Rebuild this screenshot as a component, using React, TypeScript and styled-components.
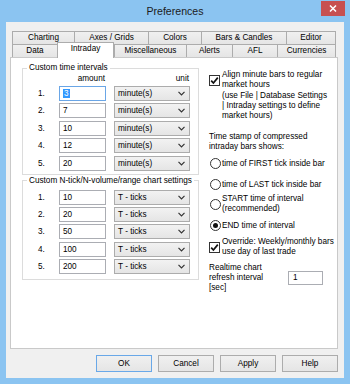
import React from 'react';
import styled, { createGlobalStyle } from 'styled-components';

const GlobalStyle = createGlobalStyle`
  html, body {
    margin: 0;
    padding: 0;
    background: #8bc4f1;
  }
  body {
    font-family: "Liberation Sans", Arial, sans-serif;
    font-size: 8.2px;
    color: #000;
  }
`;

const Window = styled.div`
  width: 350px;
  height: 384px;
  display: flex;
  flex-direction: column;
  background: #8bc4f1;
`;

const TitleBar = styled.div`
  height: 22px;
  display: grid;
  grid-template-columns: 1fr auto 1fr;
  align-items: start;
`;

const Title = styled.div`
  grid-column: 2;
  font-size: 10.6px;
  line-height: 23px;
  color: #1b1b1b;
`;

const CloseButton = styled.div`
  grid-column: 3;
  justify-self: end;
  width: 24px;
  height: 15px;
  margin: 1px 5px 0 0;
  background: #c75050;
  display: flex;
  align-items: center;
  justify-content: center;
`;

const Client = styled.div`
  flex: 1;
  margin: 0 6px 6px;
  padding: 9px 6px 6px 4px;
  background: #f0f0f0;
  display: flex;
  flex-direction: column;
`;

const TabStrip = styled.div`
  margin-left: 2px;
  width: 324px;
  display: flex;
  flex-direction: column;
`;

const TabRow = styled.div`
  height: 13px;
  display: flex;
`;

const Tab = styled.div<{ $w: number; $active?: boolean }>`
  box-sizing: border-box;
  width: ${(p) => p.$w}px;
  height: ${(p) => (p.$active ? 16 : 13)}px;
  margin-top: ${(p) => (p.$active ? -2 : 0)}px;
  border-top: 1px solid #acacac;
  border-left: 1px solid #acacac;
  border-right: ${(p) => (p.$active ? '1px solid #acacac' : 'none')};
  background: ${(p) => (p.$active ? '#fff' : 'linear-gradient(#f0f0f0, #e5e5e5)')};
  position: ${(p) => (p.$active ? 'relative' : 'static')};
  z-index: ${(p) => (p.$active ? 1 : 0)};
  text-align: center;
  line-height: 12px;
  white-space: nowrap;

  &:last-child {
    border-right: 1px solid #acacac;
  }
`;

const Panel = styled.div`
  flex: 1;
  border: 1px solid #c9c9c9;
  background: #fff;
  padding: 5px 0 0 11px;
  display: grid;
  grid-template-columns: 177px 1fr;
  column-gap: 10px;
  align-items: start;
`;

const LeftColumn = styled.div`
  display: flex;
  flex-direction: column;
  gap: 1px;
`;

const Group = styled.fieldset`
  margin: 0;
  padding: 0;
  min-width: 0;
  border: 1px solid #dcdcdc;
`;

const Legend = styled.legend`
  margin-left: 4px;
  padding: 0 2px;
  line-height: 10px;
  white-space: nowrap;
`;

const GroupBody = styled.div<{ $top: number; $bottom: number }>`
  padding: ${(p) => p.$top}px 0 ${(p) => p.$bottom}px 15px;
`;

const FieldGrid = styled.div`
  display: grid;
  grid-template-columns: 13px 47px 76px;
  column-gap: 8px;
  row-gap: 2.4px;
  grid-auto-rows: 15px;
  align-items: center;
`;

const HeaderRow = styled.div`
  display: grid;
  grid-template-columns: 13px 47px 76px;
  column-gap: 8px;
  line-height: 10px;
  margin: 1px 0 2px;
`;

const HeaderCell = styled.div`
  text-align: right;
  padding-right: 1px;
`;

const RowNum = styled.div`
  line-height: 15px;
`;

const TextBox = styled.div<{ $focused?: boolean }>`
  box-sizing: border-box;
  height: 15px;
  border: 1px solid ${(p) => (p.$focused ? '#6aa6e6' : '#abadb3')};
  background: #fff;
  padding-left: 3px;
  line-height: 13px;
  white-space: nowrap;
`;

const Selected = styled.span`
  background: #3399ff;
  color: #fff;
  padding: 0 1px;
`;

const Combo = styled.div`
  box-sizing: border-box;
  height: 15px;
  border: 1px solid #acacac;
  background: linear-gradient(#f2f2f2, #e5e5e5);
  padding: 0 4px 0 3px;
  display: flex;
  align-items: center;
  justify-content: space-between;
  white-space: nowrap;
`;

const RightColumn = styled.div`
  display: flex;
  flex-direction: column;
  line-height: 10px;
`;

const Block = styled.div<{ $top: number; $indent?: number }>`
  margin-top: ${(p) => p.$top}px;
  margin-left: ${(p) => p.$indent ?? 0}px;
  white-space: nowrap;
`;

const OptionRow = styled.div<{ $top: number }>`
  margin-top: ${(p) => p.$top}px;
  display: flex;
  align-items: center;
  gap: 2px;
  white-space: nowrap;
`;

const CheckBox = styled.div`
  box-sizing: border-box;
  width: 11px;
  height: 11px;
  border: 1px solid #333;
  background: #fff;
  display: flex;
  align-items: center;
  justify-content: center;
  flex-shrink: 0;
`;

const Radio = styled.div<{ $on?: boolean }>`
  box-sizing: border-box;
  width: 11px;
  height: 11px;
  margin-left: 1px;
  margin-right: -1px;
  border: 1px solid #333;
  border-radius: 50%;
  background: #fff;
  display: flex;
  align-items: center;
  justify-content: center;
  flex-shrink: 0;

  &::after {
    content: '';
    display: ${(p) => (p.$on ? 'block' : 'none')};
    width: 5px;
    height: 5px;
    border-radius: 50%;
    background: #111;
  }
`;

const RefreshRow = styled.div`
  margin-top: 6px;
  display: flex;
  align-items: center;
`;

const RefreshLabel = styled.div`
  width: 79px;
  white-space: nowrap;
`;

const SmallBox = styled(TextBox)`
  width: 35px;
  height: 14px;
  padding-left: 4px;
  line-height: 12px;
`;

const ButtonBar = styled.div`
  margin-top: 6px;
  display: flex;
  justify-content: flex-end;
  gap: 6px;
`;

const Button = styled.div<{ $default?: boolean }>`
  box-sizing: border-box;
  width: 56px;
  height: 17px;
  border: 1px solid ${(p) => (p.$default ? '#69a8e8' : '#acacac')};
  background: linear-gradient(#f0f0f0, #e5e5e5);
  text-align: center;
  line-height: 15px;
`;

const Chevron = () => (
  <svg width="7" height="5" viewBox="0 0 7 5">
    <polyline points="0.5,0.8 3.5,3.8 6.5,0.8" fill="none" stroke="#333" strokeWidth="1.2" />
  </svg>
);

const Check = () => (
  <svg width="9" height="9" viewBox="0 0 9 9">
    <polyline points="1.2,4.6 3.4,7 7.8,1.6" fill="none" stroke="#111" strokeWidth="1.7" />
  </svg>
);

const row1 = [
  { label: 'Charting', w: 62 },
  { label: 'Axes / Grids', w: 74 },
  { label: 'Colors', w: 53 },
  { label: 'Bars & Candles', w: 85 },
  { label: 'Editor', w: 50 },
];

const row2 = [
  { label: 'Data', w: 45 },
  { label: 'Intraday', w: 57, active: true },
  { label: 'Miscellaneous', w: 72 },
  { label: 'Alerts', w: 46 },
  { label: 'AFL', w: 45 },
  { label: 'Currencies', w: 59 },
];

const timeIntervals = ['3', '7', '10', '12', '20'];
const tickIntervals = ['10', '20', '50', '100', '200'];

const App = () => {
  return (
    <Window>
      <GlobalStyle />
      <TitleBar>
        <Title>Preferences</Title>
        <CloseButton>
          <svg width="8" height="7" viewBox="0 0 8 7">
            <path d="M1 0.5 L7 6.5 M7 0.5 L1 6.5" stroke="#fff" strokeWidth="1.5" />
          </svg>
        </CloseButton>
      </TitleBar>
      <Client>
        <TabStrip>
          <TabRow>
            {row1.map((t) => (
              <Tab key={t.label} $w={t.w}>
                {t.label}
              </Tab>
            ))}
          </TabRow>
          <TabRow>
            {row2.map((t) => (
              <Tab key={t.label} $w={t.w} $active={t.active}>
                {t.label}
              </Tab>
            ))}
          </TabRow>
        </TabStrip>
        <Panel>
          <LeftColumn>
            <Group>
              <Legend>Custom time intervals</Legend>
              <GroupBody $top={0} $bottom={3}>
                <HeaderRow>
                  <span />
                  <HeaderCell>amount</HeaderCell>
                  <HeaderCell>unit</HeaderCell>
                </HeaderRow>
                <FieldGrid>
                  {timeIntervals.map((v, i) => (
                    <React.Fragment key={i}>
                      <RowNum>{i + 1}.</RowNum>
                      <TextBox $focused={i === 0}>{i === 0 ? <Selected>{v}</Selected> : v}</TextBox>
                      <Combo>
                        minute(s)
                        <Chevron />
                      </Combo>
                    </React.Fragment>
                  ))}
                </FieldGrid>
              </GroupBody>
            </Group>
            <Group>
              <Legend>Custom N-tick/N-volume/range chart settings</Legend>
              <GroupBody $top={4} $bottom={5}>
                <FieldGrid>
                  {tickIntervals.map((v, i) => (
                    <React.Fragment key={i}>
                      <RowNum>{i + 1}.</RowNum>
                      <TextBox>{v}</TextBox>
                      <Combo>
                        T - ticks
                        <Chevron />
                      </Combo>
                    </React.Fragment>
                  ))}
                </FieldGrid>
              </GroupBody>
            </Group>
          </LeftColumn>
          <RightColumn>
            <OptionRow $top={7}>
              <CheckBox>
                <Check />
              </CheckBox>
              <div>
                Align minute bars to regular
                <br />
                market hours
              </div>
            </OptionRow>
            <Block $top={1} $indent={13}>
              (use File | Database Settings
              <br />| Intraday settings to define
              <br />
              market hours)
            </Block>
            <Block $top={11}>
              Time stamp of compressed
              <br />
              intraday bars shows:
            </Block>
            <OptionRow $top={6}>
              <Radio />
              <div>time of FIRST tick inside bar</div>
            </OptionRow>
            <OptionRow $top={10}>
              <Radio />
              <div>time of LAST tick inside bar</div>
            </OptionRow>
            <OptionRow $top={4}>
              <Radio />
              <div>
                START time of interval
                <br />
                (recommended)
              </div>
            </OptionRow>
            <OptionRow $top={6}>
              <Radio $on />
              <div>END time of interval</div>
            </OptionRow>
            <OptionRow $top={6}>
              <CheckBox>
                <Check />
              </CheckBox>
              <div>
                Override: Weekly/monthly bars
                <br />
                use day of last trade
              </div>
            </OptionRow>
            <RefreshRow>
              <RefreshLabel>
                Realtime chart
                <br />
                refresh interval
                <br />
                [sec]
              </RefreshLabel>
              <SmallBox>1</SmallBox>
            </RefreshRow>
          </RightColumn>
        </Panel>
        <ButtonBar>
          <Button $default>OK</Button>
          <Button>Cancel</Button>
          <Button>Apply</Button>
          <Button>Help</Button>
        </ButtonBar>
      </Client>
    </Window>
  );
};

export default App;
